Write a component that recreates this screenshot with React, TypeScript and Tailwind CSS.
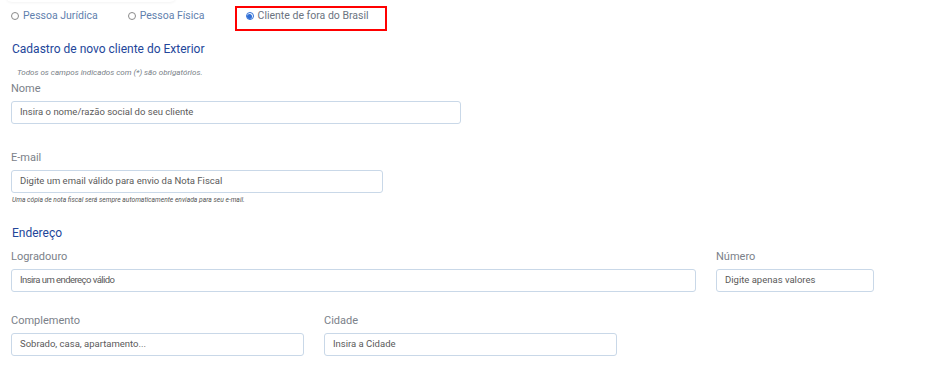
import React from "react";

function Radio({ checked, label, className }: { checked?: boolean; label: string; className?: string }) {
  return (
    <label className={`flex items-center gap-[4px] leading-[16px] ${className ?? ""}`}>
      <span
        className={`w-[8px] h-[8px] rounded-full border flex items-center justify-center ${
          checked ? "border-[#2f6fd6]" : "border-[#8a8a8a]"
        }`}
      >
        {checked && <span className="w-[5px] h-[5px] rounded-full bg-[#2f6fd6]" />}
      </span>
      <span>{label}</span>
    </label>
  );
}

function Field({
  label,
  placeholder,
  width,
  narrow,
}: {
  label: string;
  placeholder: string;
  width: string;
  narrow?: boolean;
}) {
  return (
    <div className={`flex flex-col ${width}`}>
      <div className="h-[14px] leading-[14px] text-[11px] text-[#7b8189]">{label}</div>
      <div className="h-[23px] mt-[5px] border border-[#c9d8e8] rounded-[3px] bg-white flex items-center px-[8px]">
        <span className={`text-[9.5px] text-[#5a5a5a] ${narrow ? "tracking-[-0.55px]" : ""}`}>{placeholder}</span>
      </div>
    </div>
  );
}

export default function App() {
  return (
    <div className="w-[942px] h-[374px] bg-white relative overflow-hidden font-['Roboto',sans-serif]">
      <div className="absolute left-[6px] top-[-10px] w-[170px] h-[12px] rounded-[6px] shadow-[0_1px_3px_rgba(0,0,0,0.05)]" />
      <div className="flex items-center h-[32px] text-[10.5px]">
        <Radio label="Pessoa Jurídica" className="ml-[11px] text-[#5f7fae]" />
        <Radio label="Pessoa Física" className="ml-[30px] text-[#5f7fae]" />
        <div className="ml-[30px] self-start mt-[6px] w-[152px] h-[25px] border-2 border-[#ff0000] flex items-start pl-[9px]">
          <Radio checked label="Cliente de fora do Brasil" className="text-[#6b7380]" />
        </div>
      </div>
      <div className="px-[12px]">
        <div className="mt-[9px] h-[16px] leading-[16px] text-[12px] text-[#23469a]">
          Cadastro de novo cliente do Exterior
        </div>
        <div className="mt-[11px] ml-[5px] h-[10px] leading-[10px] text-[8px] italic text-[#7a7f88]">
          Todos os campos indicados com (*) são obrigatórios.
        </div>
        <div className="mt-[4px] -ml-[1px]">
          <Field label="Nome" placeholder="Insira o nome/razão social do seu cliente" width="w-[450px]" />
        </div>
        <div className="mt-[27px] -ml-[1px]">
          <Field label="E-mail" placeholder="Digite um email válido para envio da Nota Fiscal" width="w-[372px]" />
        </div>
        <div className="mt-[3px] h-[8px] leading-[8px] text-[6.7px] italic text-[#555]">
          Uma cópia de nota fiscal será sempre automaticamente enviada para seu e-mail.
        </div>
        <div className="mt-[21px] h-[16px] leading-[16px] text-[12px] text-[#23469a]">Endereço</div>
        <div className="mt-[9px] -ml-[1px] flex gap-[20px]">
          <Field label="Logradouro" placeholder="Insira um endereço válido" width="w-[685px]" narrow />
          <Field label="Número" placeholder="Digite apenas valores" width="w-[158px]" />
        </div>
        <div className="mt-[22px] -ml-[1px] flex gap-[20px]">
          <Field label="Complemento" placeholder="Sobrado, casa, apartamento..." width="w-[293px]" />
          <Field label="Cidade" placeholder="Insira a Cidade" width="w-[293px]" />
        </div>
      </div>
    </div>
  );
}
